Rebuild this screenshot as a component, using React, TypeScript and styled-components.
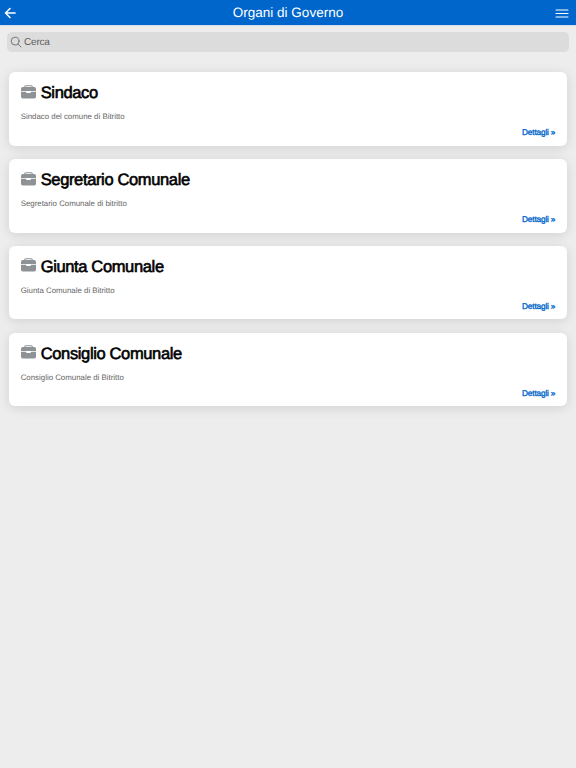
import React from "react";
import styled, { createGlobalStyle } from "styled-components";

const GlobalStyle = createGlobalStyle`
  * { box-sizing: border-box; }
  body {
    margin: 0;
    background: #ededed;
    font-family: "Liberation Sans", Arial, sans-serif;
    text-rendering: geometricPrecision;
  }
`;

const Page = styled.div`
  min-height: 100vh;
  background: #ededed;
`;

const Toolbar = styled.header`
  display: grid;
  grid-template-columns: 40px 1fr 40px;
  align-items: center;
  height: 25px;
  background: #0066cc;
  color: #fff;
  box-shadow: 0 1px 0 rgba(0, 102, 204, 0.12);
`;

const IconButton = styled.button<{ $end?: boolean }>`
  display: flex;
  justify-content: ${(p) => (p.$end ? "flex-end" : "flex-start")};
  align-items: center;
  height: 25px;
  padding: ${(p) => (p.$end ? "1px 7px 0 0" : "0 0 0 4px")};
  border: 0;
  background: none;
  color: inherit;
`;

const Title = styled.h1`
  margin: 0;
  font-size: 13.5px;
  font-weight: 400;
  line-height: 25px;
  text-align: center;
`;

const SearchBar = styled.label`
  display: flex;
  align-items: center;
  height: 20px;
  margin: 7px 7px 0;
  padding-left: 3px;
  gap: 2px;
  border-radius: 5px;
  background: #dcdcdc;
  color: #6b6b6b;
`;

const SearchInput = styled.input`
  flex: 1;
  min-width: 0;
  padding: 0;
  border: 0;
  outline: 0;
  background: none;
  font: 10px "Liberation Sans", Arial, sans-serif;
  letter-spacing: -0.2px;
  text-rendering: geometricPrecision;
  color: #555;
  &::placeholder {
    color: #606060;
    opacity: 1;
  }
`;

const CardList = styled.main`
  display: flex;
  flex-direction: column;
  gap: 13.2px;
  padding: 20px 9.3px 0;
`;

const Card = styled.article`
  display: flex;
  flex-direction: column;
  height: 73.7px;
  padding: 11px 11.4px 0;
  border-radius: 6px;
  background: #fff;
  box-shadow: 0 2px 12px rgba(0, 0, 0, 0.12);
`;

const CardHeading = styled.div`
  display: flex;
  align-items: center;
  gap: 5px;
  height: 19px;

  svg {
    margin-bottom: 1.6px;
  }
`;

const CardTitle = styled.h2`
  margin: 0;
  padding-top: 2px;
  font-size: 16.5px;
  font-weight: 400;
  line-height: 19px;
  letter-spacing: -0.36px;
  color: #000;
  -webkit-text-stroke: 0.6px #000;
`;

const Description = styled.p`
  margin: 10px 0 0;
  font-size: 7.86px;
  line-height: 10px;
  color: #666;
`;

const Details = styled.a`
  align-self: flex-end;
  margin-top: 5px;
  font-size: 8.3px;
  line-height: 10px;
  letter-spacing: -0.18px;
  color: #0066cc;
  -webkit-text-stroke: 0.35px #0066cc;
`;

const BackIcon = () => (
  <svg width="13" height="12" viewBox="0 0 13 12" fill="none" stroke="currentColor" strokeWidth="1.5" strokeLinecap="round" strokeLinejoin="round">
    <path d="M6 1.5 1.5 6 6 10.5M1.7 6h9.4" />
  </svg>
);

const MenuIcon = () => (
  <svg width="14" height="9" viewBox="0 0 14 9" stroke="currentColor" strokeWidth="1.1" strokeLinecap="round">
    <path d="M1 1h12M1 4.5h12M1 8h12" />
  </svg>
);

const SearchIcon = () => (
  <svg width="12" height="12" viewBox="0 0 12 12" fill="none" stroke="currentColor" strokeWidth="0.9" strokeLinecap="round">
    <circle cx="5.1" cy="5.1" r="3.9" />
    <path d="m8 8 3 3" />
  </svg>
);

const BriefcaseIcon = () => (
  <svg width="15" height="14" viewBox="0 0 15 14" fill="#8e9295">
    <path d="M3.2 3V1.8Q3.2.3 4.7.3h5.6q1.5 0 1.5 1.5V3h-1V2q0-.7-.7-.7H4.9q-.7 0-.7.7v1z" />
    <path d="M1.7 2.1h11.6Q15 2.1 15 3.8v2.3H0V3.8Q0 2.1 1.7 2.1z" />
    <path d="M0 6.8h5v.3q0 1 1 1h3q1 0 1-1v-.3h5v5q0 1.7-1.7 1.7H1.7Q0 13.5 0 11.8z" />
  </svg>
);

const bodies = [
  { name: "Sindaco", description: "Sindaco del comune di Bitritto" },
  { name: "Segretario Comunale", description: "Segretario Comunale di bitritto" },
  { name: "Giunta Comunale", description: "Giunta Comunale di Bitritto" },
  { name: "Consiglio Comunale", description: "Consiglio Comunale di Bitritto" },
];

export default function App() {
  return (
    <Page>
      <GlobalStyle />
      <Toolbar>
        <IconButton aria-label="Indietro"><BackIcon /></IconButton>
        <Title>Organi di Governo</Title>
        <IconButton $end aria-label="Menu"><MenuIcon /></IconButton>
      </Toolbar>
      <SearchBar>
        <SearchIcon />
        <SearchInput placeholder="Cerca" />
      </SearchBar>
      <CardList>
        {bodies.map((body) => (
          <Card key={body.name}>
            <CardHeading>
              <BriefcaseIcon />
              <CardTitle>{body.name}</CardTitle>
            </CardHeading>
            <Description>{body.description}</Description>
            <Details>Dettagli »</Details>
          </Card>
        ))}
      </CardList>
    </Page>
  );
}
